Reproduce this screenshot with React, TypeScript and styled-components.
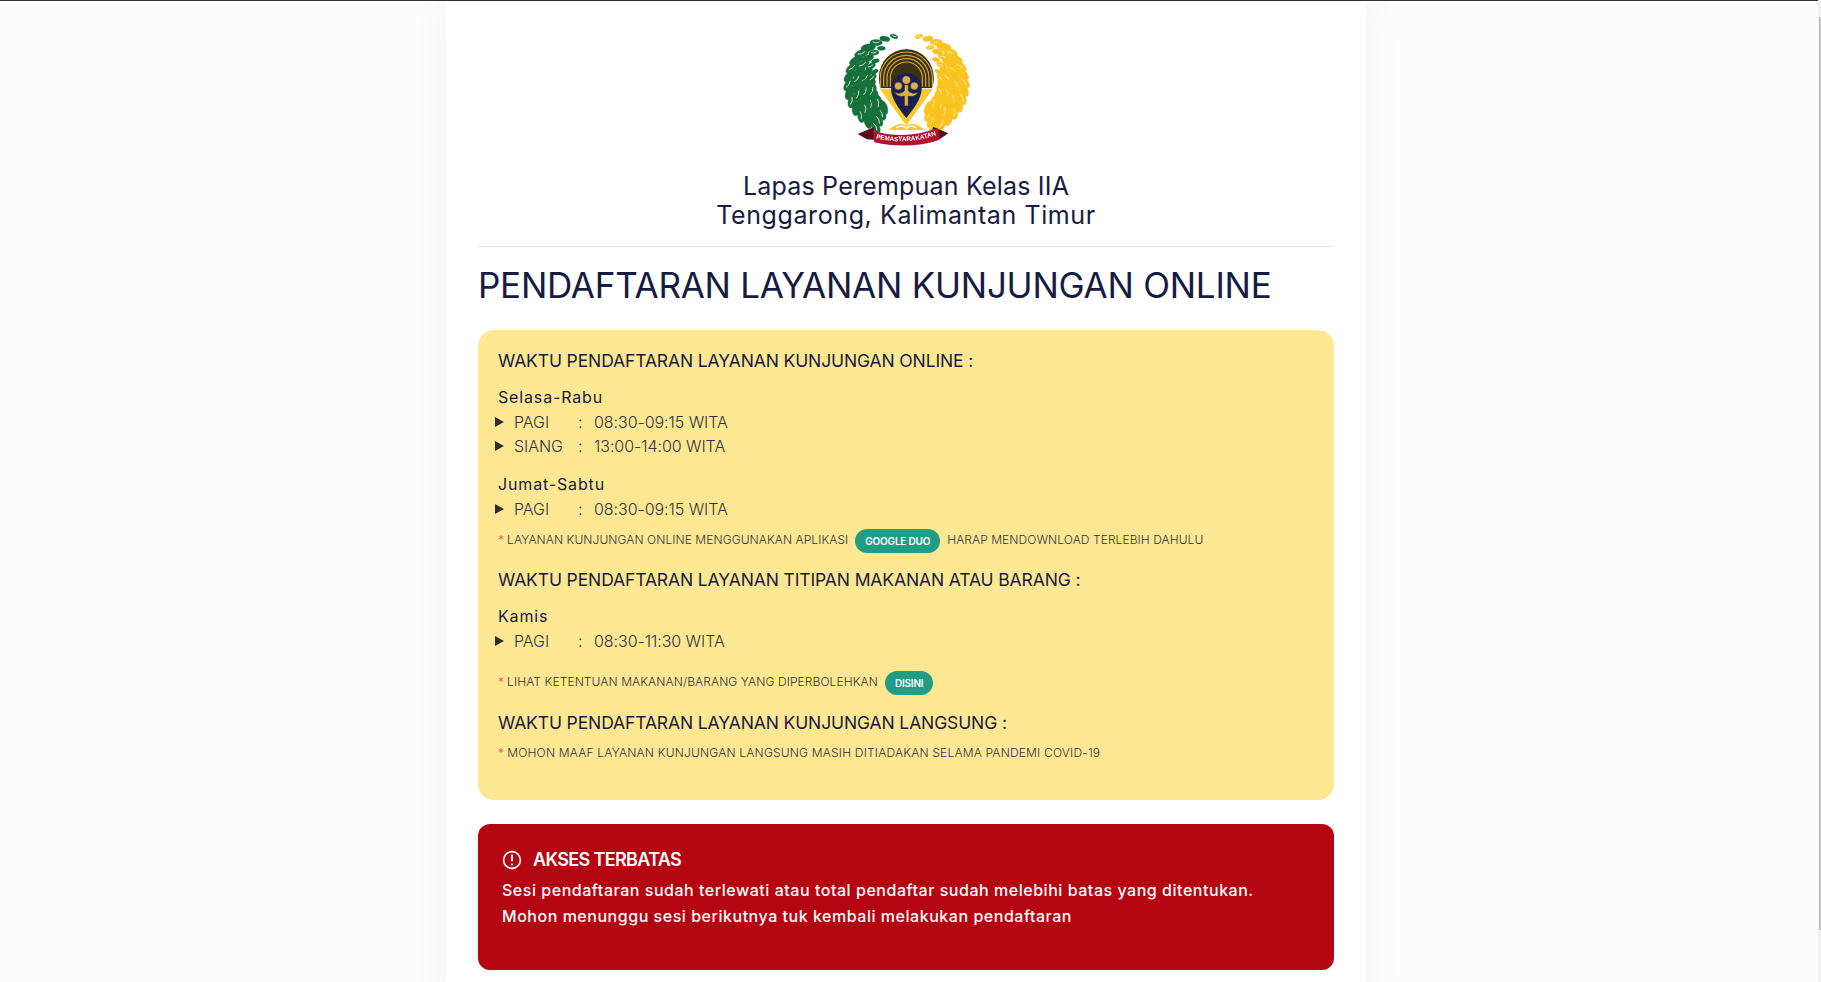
import styled, { createGlobalStyle } from "styled-components"

const Global = createGlobalStyle`
    html {
        scrollbar-width: none;
    }

    body {
        margin: 0;
        border-top: 1px solid #2b2f3f;
        background: #fcfcfc;
        font-family: Inter, "Liberation Sans", sans-serif;
        color: #161b42;
    }
`

const Page = styled.div`
    padding-right: 9px;
`

const ScrollTrack = styled.div`
    position: fixed;
    top: 0;
    right: 0;
    bottom: 0;
    width: 3px;
    background: #f1f1f1;
`

const ScrollThumb = styled.div`
    position: absolute;
    top: 17px;
    right: 0;
    width: 2px;
    height: 913px;
    background: #c1c1c1;
`

const Card = styled.main`
    width: 920px;
    box-sizing: border-box;
    margin: 0 auto;
    padding: 27px 32px 50px;
    background: #fff;
    box-shadow: 0 0 40px rgba(0, 0, 0, 0.045);
`

const LogoWrap = styled.div`
    display: flex;
    justify-content: center;

    & svg {
        filter: blur(0.35px);
    }
`

const Title = styled.h2`
    margin: 19px 0 16px;
    font-size: 25px;
    line-height: 29px;
    font-weight: 400;
    text-align: center;
`

const TitleLine = styled.span<{ $spacing: number }>`
    display: block;
    letter-spacing: ${(p) => p.$spacing}px;
`

const Divider = styled.hr`
    margin: 0;
    border: 0;
    border-top: 1px solid #e5e7eb;
`

const Heading = styled.h1`
    margin: 18px 0 25px;
    font-size: 35px;
    line-height: 40px;
    font-weight: 430;
    letter-spacing: -0.25px;
`

const ScheduleBox = styled.section`
    padding: 17px 20px 38px;
    background: #fee792;
    border-radius: 16px;
`

const SectionTitle = styled.h3<{ $gap: number }>`
    margin: ${(p) => p.$gap}px 0 0;
    font-size: 17.5px;
    line-height: 28px;
    font-weight: 430;
    letter-spacing: -0.12px;
`

const Day = styled.div<{ $gap: number }>`
    margin: ${(p) => p.$gap}px 0 1px;
    font-size: 16px;
    line-height: 24px;
    font-weight: 430;
    letter-spacing: 0.85px;
`

const SlotRow = styled.div`
    display: grid;
    grid-template-columns: 19px 64px 16px auto;
    justify-content: start;
    align-items: center;
    margin-left: -3px;
    font-size: 16px;
    line-height: 24px;
    font-weight: 300;
    letter-spacing: -0.05px;
    color: #2f3442;
`

const Marker = styled.span`
    width: 0;
    height: 0;
    border-style: solid;
    border-width: 5px 0 5px 9px;
    border-color: transparent transparent transparent #2e2e2e;
`

const Note = styled.p<{ $gap: number; $spacing: number }>`
    display: flex;
    align-items: center;
    margin: ${(p) => p.$gap}px 0 0;
    font-size: 12px;
    line-height: 18px;
    font-weight: 300;
    letter-spacing: ${(p) => p.$spacing}px;
    color: #2f3442;
`

const Star = styled.span`
    margin-right: 3px;
    color: #ef4444;
`

const Badge = styled.span`
    display: inline-flex;
    align-items: center;
    justify-content: center;
    box-sizing: border-box;
    height: 24px;
    margin: 2px 7px 0 7px;
    padding: 0 10px;
    border-radius: 12px;
    background: #1f9e85;
    color: #fff;
    font-size: 10px;
    font-weight: 600;
    letter-spacing: -0.2px;
`

const AlertBox = styled.section`
    margin-top: 24px;
    padding: 22px 24px 41px;
    background: #b50511;
    border-radius: 12px;
    color: #fff;
`

const AlertHead = styled.div`
    display: flex;
    align-items: center;
    gap: 11px;
    margin-bottom: 3px;
    font-size: 18px;
    line-height: 28px;
    font-weight: 600;
    letter-spacing: -0.65px;
`

const AlertText = styled.p`
    margin: 0;
    font-size: 16px;
    line-height: 26px;
    font-weight: 450;
    letter-spacing: 0.53px;
`

// wreath leaves laid along an elliptical arc, angles in degrees
function arc(rx: number, ry: number, cx: number, from: number, to: number, n: number) {
    return Array.from({ length: n }, (_, i) => {
        const a = from + ((to - from) * i) / (n - 1)
        const rad = (a * Math.PI) / 180
        const size = 0.55 + 0.45 * Math.min(i / 3, 1)
        return { x: cx + rx * Math.cos(rad), y: 170 + ry * Math.sin(rad), a, size }
    })
}

function Wreath({ side }: { side: "left" | "right" }) {
    const left = side === "left"
    const rows = left
        ? [
              arc(172, 148, 195, 258, 122, 15),
              arc(148, 126, 195, 240, 124, 12),
              arc(124, 106, 195, 222, 126, 10),
              arc(104, 90, 195, 205, 130, 7),
          ]
        : [
              arc(172, 148, 198, -78, 62, 16),
              arc(148, 126, 198, -62, 60, 13),
              arc(124, 106, 198, -45, 58, 10),
              arc(104, 90, 198, -25, 52, 7),
          ]
    return (
        <g fill={left ? "#16703a" : "#fac31f"} stroke={left ? "#16703a" : "#fac31f"} strokeWidth="1">
            {rows.flat().map((p, i) => (
                <g key={i} transform={`rotate(${p.a + (left ? -58 : 58)} ${p.x} ${p.y})`}>
                    <ellipse cx={p.x} cy={p.y} rx={22 * p.size} ry={11 * p.size} />
                    {i % 2 === 0 && (
                        <path
                            d={`M${p.x - 12 * p.size} ${p.y + 2}q${12 * p.size} -6 ${24 * p.size} 0`}
                            fill="none"
                            stroke={left ? "#fff" : "#fff3c4"}
                            strokeWidth="2.2"
                        />
                    )}
                </g>
            ))}
        </g>
    )
}

function Logo() {
    return (
        <svg width="130" height="125" viewBox="0 0 390 375">
            <Wreath side="left" />
            <Wreath side="right" />
            <path d="M112 180c24 34 44 62 84 116 40-54 60-82 84-116z" fill="#f9c82c" stroke="#fff" strokeWidth="4" />
            <path d="M112 150a84 88 0 0 1 168 0c0 12-3 22-6 32H118c-3-10-6-20-6-32z" fill="#3c3216" stroke="#fff" strokeWidth="3" />
            {[78, 68, 58, 48].map((r) => (
                <path
                    key={r}
                    d={`M${196 - r} 176v-26a${r} ${r} 0 0 1 ${r * 2} 0v26`}
                    fill="none"
                    stroke="#d6a934"
                    strokeWidth="3.5"
                />
            ))}
            <path d="M150 182a46 47 0 0 1 92 0c0 30-26 62-46 88-20-26-46-58-46-88z" fill="#1a2150" />
            <g fill="#d9b04a" stroke="#1a2150" strokeWidth="2">
                <circle cx="196" cy="156" r="13" />
                <circle cx="172" cy="174" r="12" />
                <circle cx="220" cy="174" r="12" />
                <path d="M160 192c12 6 22 4 30-4v-18h12v18c8 8 18 10 30 4-6 12-20 16-30 12v30h-12v-30c-10 4-24 0-30-12z" />
            </g>
            <path d="M142 306c30-24 48-22 54-10 8-12 26-14 56 10z" fill="#f9c82c" />
            <path d="M166 300c12-9 22-7 30 2 8-9 18-11 30-2" fill="none" stroke="#fff" strokeWidth="4" />
            <path d="M50 318l48-20 8 38-28-2z" fill="#5a0c18" />
            <path d="M322 316l-46-20-6 38 28-2z" fill="#5a0c18" />
            <path d="M95 308c60 18 130 18 195-8l6 35c-64 22-132 22-196 8z" fill="#b3122f" />
            <path id="ribbon-line" d="M104 331c56 14 120 12 182-10" fill="none" />
            <text fontFamily="'Liberation Sans', sans-serif" fontSize="19" fontWeight="700" fill="#fff">
                <textPath href="#ribbon-line" startOffset="1">
                    PEMASYARAKATAN
                </textPath>
            </text>
        </svg>
    )
}

function Slot({ label, time }: { label: string; time: string }) {
    return (
        <SlotRow>
            <Marker />
            <span>{label}</span>
            <span>:</span>
            <span>{time}</span>
        </SlotRow>
    )
}

export default function App() {
    return (
        <Page>
            <Global />
            <ScrollTrack>
                <ScrollThumb />
            </ScrollTrack>
            <Card>
                <LogoWrap>
                    <Logo />
                </LogoWrap>
                <Title>
                    <TitleLine $spacing={0.2}>Lapas Perempuan Kelas IIA</TitleLine>
                    <TitleLine $spacing={0.6}>Tenggarong, Kalimantan Timur</TitleLine>
                </Title>
                <Divider />
                <Heading>PENDAFTARAN LAYANAN KUNJUNGAN ONLINE</Heading>
                <ScheduleBox>
                    <SectionTitle $gap={0}>WAKTU PENDAFTARAN LAYANAN KUNJUNGAN ONLINE :</SectionTitle>
                    <Day $gap={10}>Selasa-Rabu</Day>
                    <Slot label="PAGI" time="08:30-09:15 WITA" />
                    <Slot label="SIANG" time="13:00-14:00 WITA" />
                    <Day $gap={14}>Jumat-Sabtu</Day>
                    <Slot label="PAGI" time="08:30-09:15 WITA" />
                    <Note $gap={6} $spacing={0.08}>
                        <Star>*</Star> LAYANAN KUNJUNGAN ONLINE MENGGUNAKAN APLIKASI
                        <Badge>GOOGLE DUO</Badge> HARAP MENDOWNLOAD TERLEBIH DAHULU
                    </Note>
                    <SectionTitle $gap={13}>WAKTU PENDAFTARAN LAYANAN TITIPAN MAKANAN ATAU BARANG :</SectionTitle>
                    <Day $gap={10}>Kamis</Day>
                    <Slot label="PAGI" time="08:30-11:30 WITA" />
                    <Note $gap={16} $spacing={0.1}>
                        <Star>*</Star> LIHAT KETENTUAN MAKANAN/BARANG YANG DIPERBOLEHKAN
                        <Badge>DISINI</Badge>
                    </Note>
                    <SectionTitle $gap={14}>WAKTU PENDAFTARAN LAYANAN KUNJUNGAN LANGSUNG :</SectionTitle>
                    <Note $gap={7} $spacing={0.195}>
                        <Star>*</Star> MOHON MAAF LAYANAN KUNJUNGAN LANGSUNG MASIH DITIADAKAN SELAMA PANDEMI COVID-19
                    </Note>
                </ScheduleBox>
                <AlertBox>
                    <AlertHead>
                        <svg width="20" height="20" viewBox="0 0 20 20" fill="none" stroke="#fff" strokeWidth="1.6">
                            <circle cx="10" cy="10" r="8.4" />
                            <path d="M10 4.6v6.6" strokeWidth="2" />
                            <circle cx="10" cy="14.4" r="1" fill="#fff" stroke="none" />
                        </svg>
                        AKSES TERBATAS
                    </AlertHead>
                    <AlertText>
                        Sesi pendaftaran sudah terlewati atau total pendaftar sudah melebihi batas yang ditentukan.
                    </AlertText>
                    <AlertText>Mohon menunggu sesi berikutnya tuk kembali melakukan pendaftaran</AlertText>
                </AlertBox>
            </Card>
        </Page>
    )
}
